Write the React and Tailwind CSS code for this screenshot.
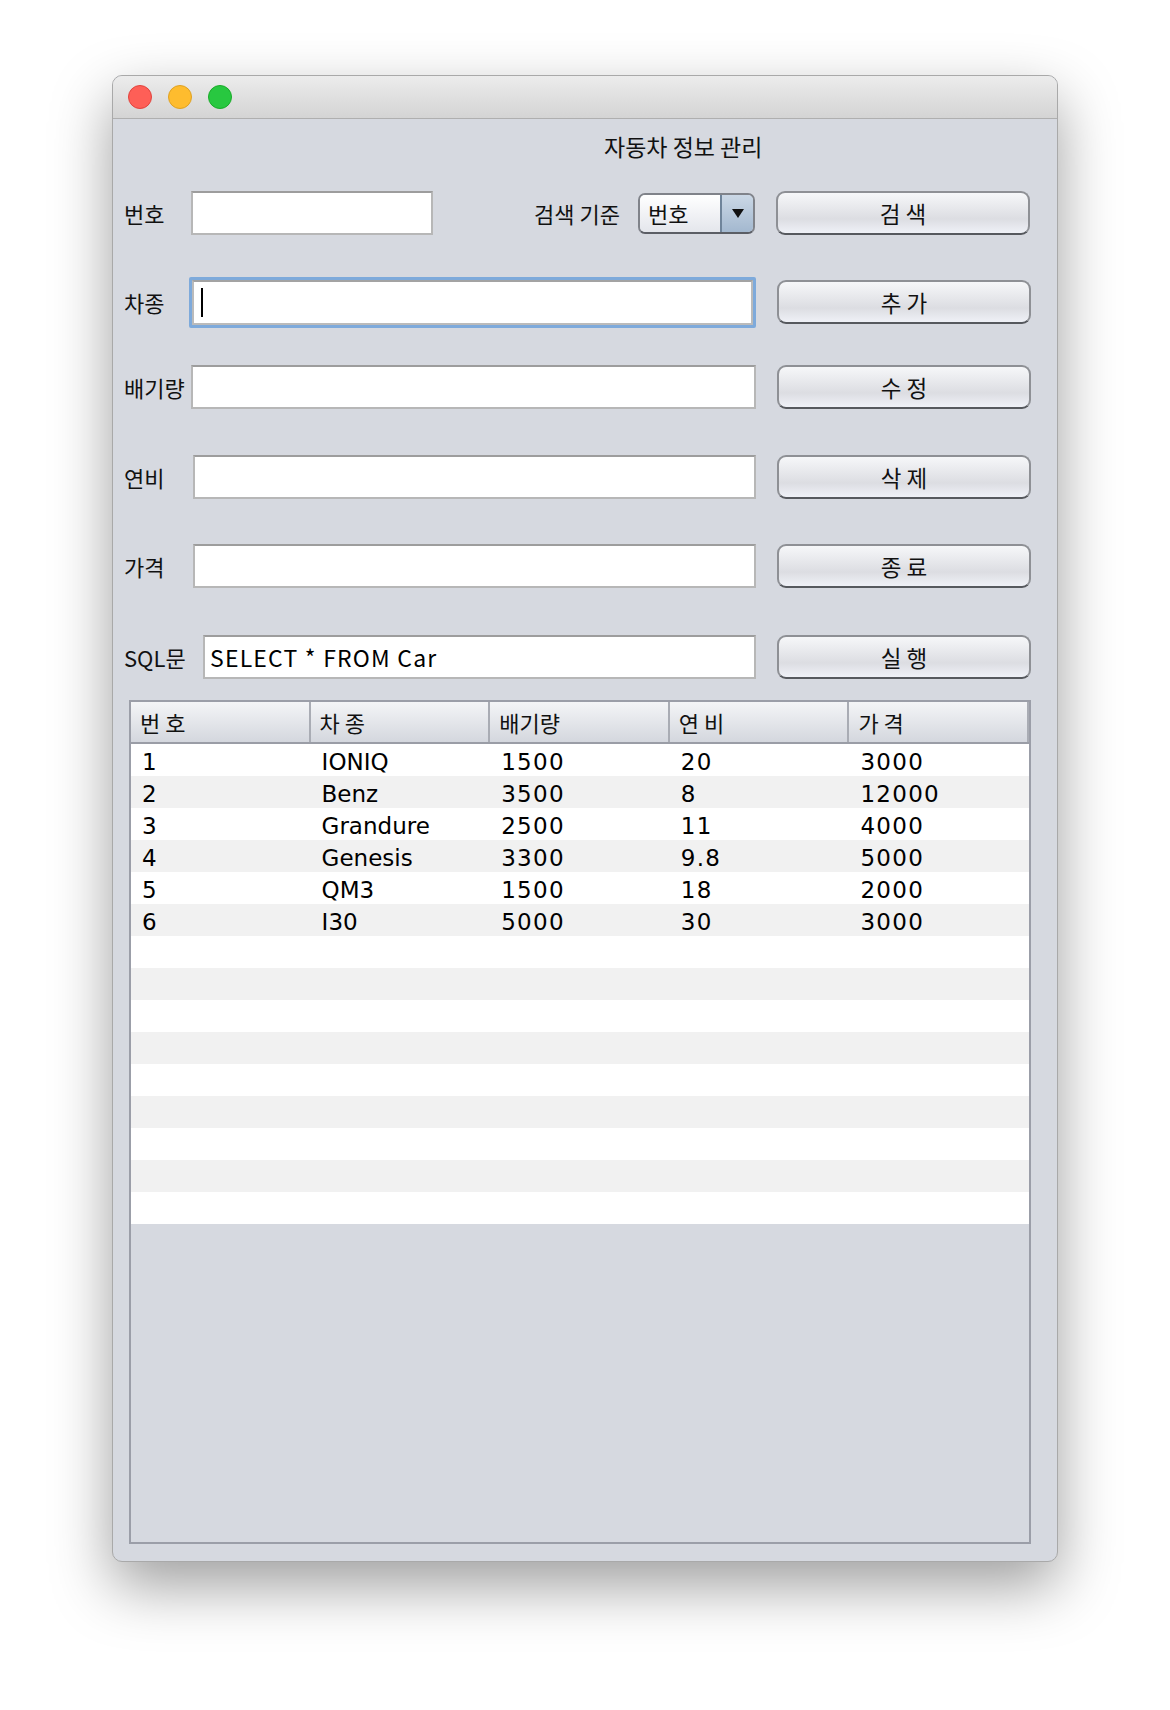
import React from 'react'

const CARS = [
  { no: '1', name: 'IONIQ', cc: '1500', eff: '20', price: '3000' },
  { no: '2', name: 'Benz', cc: '3500', eff: '8', price: '12000' },
  { no: '3', name: 'Grandure', cc: '2500', eff: '11', price: '4000' },
  { no: '4', name: 'Genesis', cc: '3300', eff: '9.8', price: '5000' },
  { no: '5', name: 'QM3', cc: '1500', eff: '18', price: '2000' },
  { no: '6', name: 'I30', cc: '5000', eff: '30', price: '3000' },
]
const TOTAL_ROWS = 15
const HEADERS = ['번 호', '차 종', '배기량', '연 비', '가 격']

const KR = "font-['Noto_Sans_CJK_KR',sans-serif]"

// ─── Aqua-style push button ─────────────────────────────────────────────────
function AquaButton({ children }) {
  return (
    <button
      className={`${KR} ml-[21px] w-[254px] h-[44px] shrink-0 rounded-[9px] border-2 border-[#8e9095] border-b-[#56595e] bg-linear-to-b from-[#f6f7f9] via-[#dcdde2] via-65% to-[#eff1f7] text-[22.5px] leading-none text-[#111] flex items-center justify-center`}
    >
      {children}
    </button>
  )
}

// ─── Text field ─────────────────────────────────────────────────────────────
function Field({ width, children }) {
  return (
    <div
      className="h-[44px] shrink-0 bg-white border-2 border-[#b7b7b7] border-t-[#9d9d9d] flex items-center pl-[5px] overflow-hidden"
      style={{ width }}
    >
      {children}
    </div>
  )
}

function FocusedField({ width }) {
  return (
    <div
      className="h-[51px] shrink-0 -ml-[2px] border-[3px] border-[#7eaadb] rounded-[2px]"
      style={{ width: width + 2 }}
    >
      <div className="h-full bg-white border-2 border-[#bbbbbb] border-t-[#a3a3a3] flex items-center pl-[7px]">
        <div className="w-[2px] h-[29px] bg-black" />
      </div>
    </div>
  )
}

function FormRow({ label, labelWidth = 67, fieldWidth = 565, focused, button, className = '', children }) {
  return (
    <div className={`flex items-center h-[44px] pl-[11px] ${className}`}>
      <span className={`${KR} text-[22px] leading-none text-[#111] shrink-0`} style={{ width: labelWidth }}>
        {label}
      </span>
      {focused ? <FocusedField width={fieldWidth} /> : <Field width={fieldWidth}>{children}</Field>}
      <AquaButton>{button}</AquaButton>
    </div>
  )
}

// ─── Table ──────────────────────────────────────────────────────────────────
function CarTable() {
  const rows = Array.from({ length: TOTAL_ROWS }, (_, i) => CARS[i] || null)
  return (
    <div className="ml-[16px] mt-[21px] w-[902px] h-[844px] border-2 border-[#9b9ea8] bg-[#d6d9e0] flex flex-col">
      <div className="grid grid-cols-5 h-[42px] shrink-0 border-b-2 border-[#9a9da6] bg-linear-to-b from-[#f4f5f7] to-[#d4d7de]">
        {HEADERS.map((h) => (
          <div
            key={h}
            className={`${KR} border-r-2 border-[#a9acb4] flex items-center pl-[9px] text-[22px] leading-none text-[#111]`}
          >
            {h}
          </div>
        ))}
      </div>
      {rows.map((r, i) => (
        <div
          key={i}
          className={`grid grid-cols-5 h-[32px] shrink-0 font-['DejaVu_Sans',sans-serif] text-[23px] leading-none text-black ${
            i % 2 === 0 ? 'bg-white' : 'bg-[#f1f1f1]'
          }`}
        >
          {r && [r.no, r.name, r.cc, r.eff, r.price].map((v, j) => (
            <div
              key={j}
              className={`flex items-center pl-[11px] pt-[4px] ${j === 1 ? '' : 'tracking-[1.3px]'}`}
            >
              {v}
            </div>
          ))}
        </div>
      ))}
    </div>
  )
}

// ─── Main window ────────────────────────────────────────────────────────────
export default function App() {
  return (
    <div className="w-[1170px] h-[1710px] bg-white pl-[112px] pt-[75px]">
      <div className="w-[946px] h-[1487px] rounded-[10px] overflow-hidden border border-[#a9a9a9] bg-[#d6d9e0] shadow-[0_24px_60px_rgba(0,0,0,0.38)] flex flex-col">
        {/* title bar */}
        <div className="h-[43px] shrink-0 border-b border-[#afafaf] bg-linear-to-b from-[#ececec] to-[#d4d4d4] flex items-center pl-[15px] gap-[16px]">
          <div className="w-[24px] h-[24px] rounded-full bg-[#fe5f57] border border-[#e0443e]" />
          <div className="w-[24px] h-[24px] rounded-full bg-[#febc2e] border border-[#dea123]" />
          <div className="w-[24px] h-[24px] rounded-full bg-[#28c840] border border-[#1aab29]" />
        </div>

        {/* heading */}
        <div className="h-[54px] flex items-center pl-[491px]">
          <span className={`${KR} text-[23px] leading-none text-[#111]`}>자동차 정보 관리</span>
        </div>

        {/* row 1: 번호 + 검색 */}
        <div className="flex items-center h-[44px] pl-[11px] mt-[18px]">
          <span className={`${KR} w-[67px] text-[22px] leading-none text-[#111] shrink-0`}>번호</span>
          <Field width={242} />
          <span className={`${KR} ml-[101px] w-[104px] shrink-0 text-[22px] leading-none text-[#111] whitespace-nowrap`}>
            검색 기준
          </span>
          <div className="w-[117px] h-[41px] shrink-0 rounded-[7px] border-2 border-[#80838a] border-b-[#5b5e65] flex overflow-hidden">
            <div className={`${KR} flex-1 bg-linear-to-b from-white to-[#e4e6ec] flex items-center pl-[8px] text-[22px] leading-none text-[#111]`}>
              번호
            </div>
            <div className="w-[33px] border-l-2 border-[#6f849a] bg-linear-to-b from-[#cbd8e6] to-[#a3b8cf] flex items-center justify-center">
              <svg width="12" height="9" viewBox="0 0 12 9">
                <path d="M0 0h12L6 9z" fill="#111" />
              </svg>
            </div>
          </div>
          <AquaButton>검 색</AquaButton>
        </div>

        <FormRow label="차종" focused button="추 가" className="mt-[45px]" />
        <FormRow label="배기량" button="수 정" className="mt-[41px]" />
        <FormRow label="연비" labelWidth={69} fieldWidth={563} button="삭 제" className="mt-[46px]" />
        <FormRow label="가격" labelWidth={69} fieldWidth={563} button="종 료" className="mt-[45px]" />
        <FormRow label="SQL문" labelWidth={79} fieldWidth={553} button="실 행" className="mt-[47px]">
          <span className={`${KR} text-[23px] tracking-[1.2px] leading-none text-black whitespace-nowrap`}>
            SELECT * FROM Car
          </span>
        </FormRow>

        <CarTable />
      </div>
    </div>
  )
}
